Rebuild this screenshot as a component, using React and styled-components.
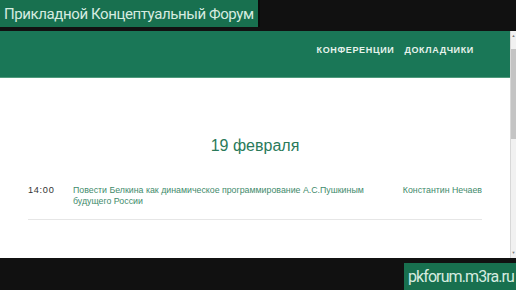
import React from 'react';
import styled, { createGlobalStyle } from 'styled-components';

const GlobalStyle = createGlobalStyle`
  html, body {
    margin: 0;
    padding: 0;
    background: #111111;
  }
  body {
    font-family: Roboto, "Liberation Sans", Arial, sans-serif;
  }
`;

const Screen = styled.div`
  width: 516px;
  height: 290px;
  display: flex;
  flex-direction: column;
  background: #111111;
  overflow: hidden;
`;

/* top black band holding the forum title */
const TopBand = styled.div`
  height: 31px;
  display: flex;
  align-items: flex-start;
`;

const Caption = styled.div`
  height: 27px;
  display: flex;
  align-items: center;
  white-space: nowrap;
  background: #18704f;
  color: #d6ece0;
  font-family: Roboto, "Liberation Sans", sans-serif;
  font-size: ${p => p.size}px;
  letter-spacing: ${p => p.tracking}px;
`;

const TitleBox = styled(Caption)`
  padding: 0 4px 0 4px;
  border-right: 2px solid #0a0a0a;
`;

/* the captured browser window */
const Browser = styled.div`
  height: 227px;
  display: flex;
`;

const Page = styled.div`
  flex: 1;
  display: flex;
  flex-direction: column;
  background: #ffffff;
`;

const NavBar = styled.nav`
  height: 47px;
  box-sizing: border-box;
  display: flex;
  align-items: flex-start;
  justify-content: flex-end;
  gap: 10px;
  padding: 14px 36px 0 0;
  background: #1a7757;
  border-bottom: 1px solid #4f9a7c;
`;

const NavLink = styled.a`
  color: #e6f2ec;
  font-family: "Liberation Sans", Arial, sans-serif;
  font-size: 9px;
  font-weight: 700;
  letter-spacing: 0.65px;
  text-decoration: none;
`;

const Content = styled.main`
  flex: 1;
  padding: 59px 28px 0;
  font-family: "Liberation Sans", Arial, sans-serif;
`;

const DayTitle = styled.h2`
  margin: 0 0 30px;
  text-align: center;
  font-weight: 400;
  font-size: 16px;
  color: #2a7a5a;
`;

const TalkRow = styled.div`
  display: grid;
  grid-template-columns: 45px 1fr auto;
  padding-bottom: 12px;
  border-bottom: 1px solid #e6e6e6;
  font-size: 8.8px;
  line-height: 11px;
`;

const Time = styled.span`
  color: #333333;
  letter-spacing: 0.7px;
  font-size: 9.2px;
`;

const TalkLink = styled.a`
  color: #3f8b6c;
  padding-right: 30px;
`;

const Speaker = styled.a`
  color: #3f8b6c;
`;

const Scrollbar = styled.div`
  width: 5px;
  display: flex;
  flex-direction: column;
  background: #f1f1f1;
  border-left: 1px solid #d8d8d8;
`;

const ScrollArrow = styled.div`
  height: 10px;
  color: #7a7a7a;
  font-size: 4px;
  line-height: 10px;
  text-align: center;
`;

const ScrollThumb = styled.div`
  height: 90px;
  margin-top: 8px;
  background: #c4c4c4;
`;

const Spacer = styled.div`
  flex: 1;
`;

const BottomBand = styled.div`
  flex: 1;
  display: flex;
  justify-content: flex-end;
  align-items: flex-end;
`;

const UrlBox = styled(Caption)`
  padding: 0 2px 0 4px;
`;

export default function App() {
  return (
    <>
      <GlobalStyle />
      <Screen>
        <TopBand>
          <TitleBox size={15} tracking={-0.4}>Прикладной Концептуальный Форум</TitleBox>
        </TopBand>
        <Browser>
          <Page>
            <NavBar>
              <NavLink>КОНФЕРЕНЦИИ</NavLink>
              <NavLink>ДОКЛАДЧИКИ</NavLink>
            </NavBar>
            <Content>
              <DayTitle>19 февраля</DayTitle>
              <TalkRow>
                <Time>14:00</Time>
                <TalkLink>
                  Повести Белкина как динамическое программирование А.С.Пушкиным будущего России
                </TalkLink>
                <Speaker>Константин Нечаев</Speaker>
              </TalkRow>
            </Content>
          </Page>
          <Scrollbar>
            <ScrollArrow>▲</ScrollArrow>
            <ScrollThumb />
            <Spacer />
            <ScrollArrow>▼</ScrollArrow>
          </Scrollbar>
        </Browser>
        <BottomBand>
          <UrlBox size={16} tracking={-0.9}>pkforum.m3ra.ru</UrlBox>
        </BottomBand>
      </Screen>
    </>
  );
}
